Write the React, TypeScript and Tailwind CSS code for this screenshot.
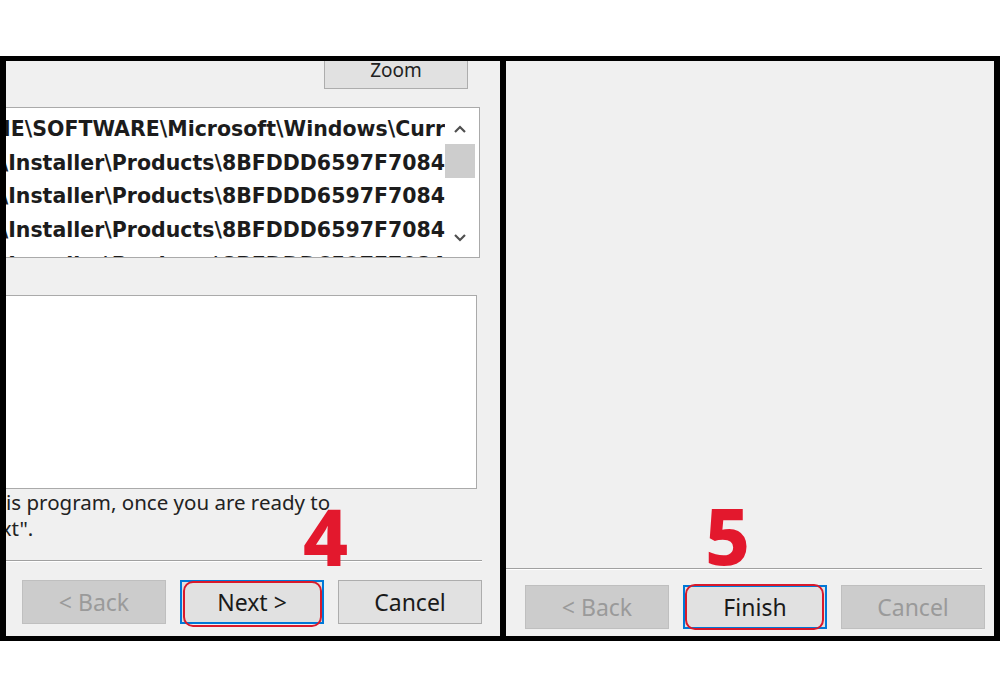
import React from 'react';

const ui = { fontFamily: '"Noto Sans", "Open Sans", Arial, sans-serif' };
const mono = { fontFamily: '"DejaVu Sans", Verdana, sans-serif' };

const keys = [
  'HKEY_LOCAL_MACHINE\\SOFTWARE\\Microsoft\\Windows\\Curr',
  'HKEY_CLASSES_ROOT\\Installer\\Products\\8BFDDD6597F7084',
  'HKEY_CLASSES_ROOT\\Installer\\Products\\8BFDDD6597F7084',
  'HKEY_CLASSES_ROOT\\Installer\\Products\\8BFDDD6597F7084',
  'HKEY_CLASSES_ROOT\\Installer\\Products\\8BFDDD6597F7084',
];

const Btn = ({ label, disabled, focused }: { label: string; disabled?: boolean; focused?: boolean }) => (
  <div
    className={
      'w-[144px] h-[44px] flex items-center justify-center text-[23px] ' +
      (disabled
        ? 'bg-[#cccccc] border border-[#bfbfbf] text-[#9a9a9a]'
        : focused
        ? 'bg-[#e1e1e1] border-2 border-[#0078d7] text-[#1a1a1a]'
        : 'bg-[#e1e1e1] border border-[#adadad] text-[#1a1a1a]')
    }
    style={ui}
  >
    {label}
  </div>
);

const Marker = ({ n, className }: { n: string; className: string }) => (
  <div className={'absolute text-[#e3182d] font-extrabold text-[78px] leading-none ' + className} style={ui}>
    {n}
  </div>
);

export default function App() {
  return (
    <div className="w-[1000px] h-[700px] bg-white pt-[56px]">
      <div className="h-[585px] bg-black flex gap-[6px] px-[6px] py-[5px]">
        {/* Left dialog */}
        <div className="relative w-[494px] h-full bg-[#f0f0f0] overflow-hidden">
          <div className="flex justify-end pr-[32px]">
            <div className="w-[144px] h-[34px] mt-[-6px] bg-[#e1e1e1] border border-[#adadad] flex items-center justify-center text-[19px] text-[#222] pb-[3px]" style={ui}>
              Zoom
            </div>
          </div>

          <div className="mt-[18px] ml-[-10px] w-[484px] h-[151px] bg-white border border-[#aaaaaa] flex">
            <div className="flex-1 overflow-hidden pt-[5px]">
              {keys.map((k, i) => (
                <div key={i} className={'h-[33.5px] flex items-center justify-end overflow-hidden' + (i === 4 ? ' mt-[2px]' : '')}>
                  <span className="whitespace-nowrap font-bold text-[20.5px] text-[#1c1c1c]" style={mono}>
                    {k}
                  </span>
                </div>
              ))}
            </div>
            <div className="w-[30px] mr-[4px] flex flex-col items-center">
              <svg width="16" height="16" viewBox="0 0 16 16" className="mt-[13px]">
                <path d="M3 11 L8 6 L13 11" fill="none" stroke="#505050" strokeWidth="2.2" />
              </svg>
              <div className="w-[30px] h-[34px] bg-[#cdcdcd] mt-[7px]" />
              <svg width="16" height="16" viewBox="0 0 16 16" className="mt-[52px]">
                <path d="M3 5 L8 10 L13 5" fill="none" stroke="#505050" strokeWidth="2.2" />
              </svg>
            </div>
          </div>

          <div className="mt-[37px] ml-[-10px] w-[481px] h-[194px] bg-white border border-[#aaaaaa]" />

          <div className="mt-[0px] ml-[-20px] text-[20.5px] leading-[26px] text-[#222] whitespace-nowrap" style={ui}>
            <div>this program, once you are ready to</div>
            <div className="ml-[-12px]">Next".</div>
          </div>

          <div className="mt-[19px] w-[476px] h-[2px] bg-[#a0a0a0] border-b border-white" />

          <div className="mt-[18px] ml-[16px] flex gap-[14px]">
            <Btn label="< Back" disabled />
            <Btn label="Next >" focused />
            <Btn label="Cancel" />
          </div>

          <Marker n="4" className="left-[297px] top-[436px]" />
          <div className="absolute left-[177px] top-[520px] w-[139px] h-[46px] border-2 border-[#d9192b] rounded-[10px]" />
        </div>

        {/* Right dialog */}
        <div className="relative w-[488px] h-full bg-[#f0f0f0] overflow-hidden flex flex-col">
          <div className="flex-1" />
          <div className="w-[476px] h-[2px] bg-[#a0a0a0] border-b border-white" />
          <div className="mt-[15px] mb-[7px] ml-[19px] flex gap-[14px]">
            <Btn label="< Back" disabled />
            <Btn label="Finish" focused />
            <Btn label="Cancel" disabled />
          </div>
          <Marker n="5" className="left-[199px] top-[435px]" />
          <div className="absolute left-[179px] top-[523px] w-[139px] h-[46px] border-2 border-[#d9192b] rounded-[10px]" />
        </div>
      </div>
    </div>
  );
}
